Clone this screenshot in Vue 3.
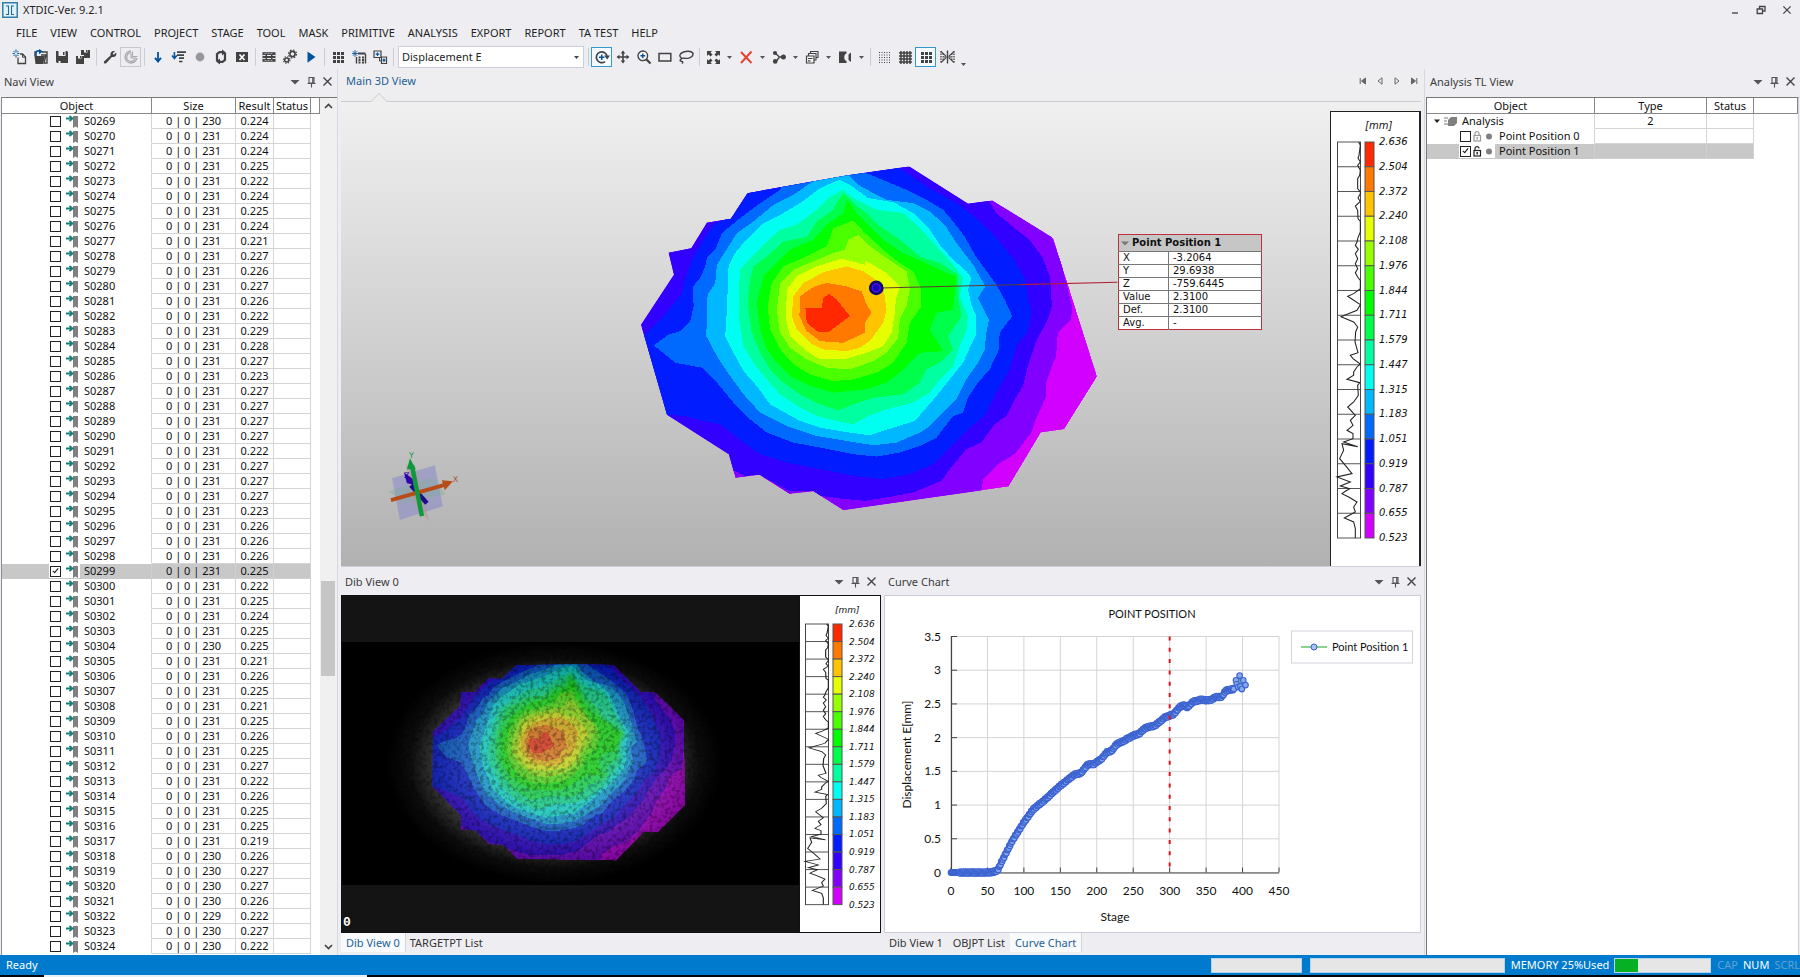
<script setup>
import { ref } from 'vue'

const menus = ['FILE', 'VIEW', 'CONTROL', 'PROJECT', 'STAGE', 'TOOL', 'MASK', 'PRIMITIVE', 'ANALYSIS', 'EXPORT', 'REPORT', 'TA TEST', 'HELP']

const D = '#424242'
const B = '#00539c'
const icons = {
  newFile: `<path d="M6 8.5V14.5H13.5V8L10.5 5H8" fill="none" stroke="${D}" stroke-width="1.3"/><path d="M10.5 5V8.2H13.5" fill="none" stroke="${D}"/><path d="M4 0.5V3M4 6V8.5M0.5 4.5H2.7M5.3 4.5H7.5M1.5 2L3 3.5M5 5.5L6.5 7M6.5 2L5 3.5M3 5.5L1.5 7" stroke="${B}" stroke-width="1"/>`,
  open: `<path d="M1.5 7H12L10 15H2.5Z" fill="${D}"/><path d="M2 7V3H4M9 3H14V14H11L13 6H8" fill="none" stroke="${D}" stroke-width="1.4"/><path d="M3 7V4C3 2 5 1.5 7 2.2" fill="none" stroke="${B}" stroke-width="1.6"/><path d="M6 0L10 2.6L6 5.2Z" fill="${B}"/>`,
  save: `<path d="M2 2H13L14 3V14H3L2 13Z" fill="${D}"/><path d="M4.5 2H11.5V7H4.5Z" fill="#eeeef2"/><path d="M9 3H10.5V6H9Z" fill="${D}"/><path d="M4.5 12H6.5V14H4.5Z" fill="#eeeef2"/>`,
  saveAll: `<path d="M6 1H15V9H9V6H6Z" fill="${D}"/><path d="M1 7H9V15H1Z" fill="${D}"/><path d="M9 1H12.5V3.5H9ZM3 7H6.5V9.5H3Z" fill="#eeeef2"/><path d="M11 1H12V3H11ZM5 7H6V9H5Z" fill="${D}"/>`,
  wrench: `<path d="M2 12.5L8.5 6.5C8 3.5 10 1.5 13 2.2L10.6 4.4L11.8 5.8L14.2 3.4C15 6.5 12.8 8.4 9.9 8L4 14.4C2.8 15 1.2 13.8 2 12.5Z" fill="${D}"/>`,
  clock: `<path d="M8 2A6 6 0 1 0 14 9" fill="none" stroke="#aaaab0" stroke-width="1.4"/><path d="M8.5 4A4.2 4.2 0 1 0 12 9.5" fill="none" stroke="#aaaab0" stroke-width="1.2"/><path d="M8 5V9H13M9.5 2.5V7.5H14.5" fill="none" stroke="#aaaab0" stroke-width="1.1"/>`,
  down: `<path d="M8 3V12" stroke="${B}" stroke-width="1.8"/><path d="M5 8.8L8 12.4L11 8.8" fill="none" stroke="${B}" stroke-width="1.9"/>`,
  stepFilter: `<path d="M6 3.2H15M6 6.2H13M8 9.2H13M8 12.5H11.5" stroke="${D}" stroke-width="1.7"/><path d="M3.4 3V9" stroke="${B}" stroke-width="1.6"/><path d="M1 6.5L3.4 9.5L5.8 6.5" fill="none" stroke="${B}" stroke-width="1.6"/>`,
  record: `<circle cx="8" cy="8" r="4.4" fill="#98989c"/>`,
  refresh: `<path d="M4 12V5L6.5 3.2H9.5M12 4V11L9.5 12.8H6.5" fill="none" stroke="${D}" stroke-width="2.2"/><path d="M9 0.5L13 3.5L9 6.5ZM7 9.5L3 12.5L7 15.5Z" fill="${D}"/>`,
  boxX: `<path d="M2 3H14V13H2Z" fill="${D}"/><path d="M2 3.8H14" stroke="${D}" stroke-width="1.6"/><path d="M5.5 5.5L10.5 11M10.5 5.5L5.5 11" stroke="#fff" stroke-width="1.7"/>`,
  strips: `<path d="M1.5 3.2H14.5V12.8H1.5Z" fill="${D}"/><path d="M1.5 6.5H4.5M6 6.5H10M11.5 6.5H14.5M1.5 9.5H4.5M6 9.5H10M11.5 9.5H14.5" stroke="#eeeef2" stroke-width="1.2"/><path d="M3.5 4.6H12.5M3.5 11.4H12.5" stroke="#eeeef2" stroke-width=".6" stroke-dasharray="2 1"/>`,
  gears: `<circle cx="10.5" cy="5" r="2.6" fill="none" stroke="${D}" stroke-width="1.6"/><circle cx="10.5" cy="5" r="4" fill="none" stroke="${D}" stroke-width="1.2" stroke-dasharray="1.6 1.54"/><circle cx="4.7" cy="11" r="2" fill="none" stroke="${D}" stroke-width="1.5"/><circle cx="4.7" cy="11" r="3.3" fill="none" stroke="${D}" stroke-width="1.1" stroke-dasharray="1.3 1.29"/>`,
  play: `<path d="M4.5 2.5L12.5 8L4.5 13.8Z" fill="${B}"/>`,
  grid9: `<path d="M3 3H6V6H3ZM7 3H10V6H7ZM11 3H14V6H11ZM3 7H6V10H3ZM7 7H10V10H7ZM11 7H14V10H11ZM3 11H6V14H3ZM7 11H10V14H7ZM11 11H14V14H11Z" fill="${D}"/>`,
  newGrid: `<path d="M4 1V8M1 4.5H7M1.8 2.2L6.2 6.8M6.2 2.2L1.8 6.8" stroke="${B}" stroke-width=".8"/><path d="M7 4.5H14.5" stroke="${D}" stroke-width="2"/><path d="M5.5 8V14.5M14.5 5V14.5" stroke="${D}" stroke-width="1.4"/><path d="M7.5 8.5H9.5M11 8.5H13M7.5 11H9.5M11 11H13M7.5 13.5H9.5M11 13.5H13" stroke="${D}" stroke-width="1.8"/>`,
  nested: `<path d="M2 2H9V8.5H2Z" fill="#eeeef2" stroke="${D}" stroke-width="1.2"/><path d="M5.5 3.5V7M3.7 5.2H7.3" stroke="${B}" stroke-width="1.2"/><path d="M7.5 8.5V12H11" fill="none" stroke="${D}"/><path d="M9.5 8H14.5V14.5H9.5Z" fill="#eeeef2" stroke="${D}" stroke-width="1.2"/><path d="M12 9.5V13M10.5 11.2H13.5" stroke="${B}" stroke-width="1.2"/>`,
  rotate: `<path d="M13 7A5.4 5.4 0 1 0 11 12.6" fill="none" stroke="${D}" stroke-width="1.7"/><path d="M10.2 6.6H16L13.1 10.4Z" fill="${D}"/><path d="M7.7 5.5V11M5 8.2H10.4" stroke="${B}" stroke-width="1.5"/>`,
  move: `<path d="M8 3V13M3 8H13" stroke="${D}" stroke-width="1.6"/><path d="M8 1.5L5.7 4.5H10.3ZM8 14.5L5.7 11.5H10.3ZM1.5 8L4.5 5.7V10.3ZM14.5 8L11.5 5.7V10.3Z" fill="${D}"/>`,
  magnify: `<circle cx="6.8" cy="6.8" r="4.8" fill="#f8f8fa" stroke="${D}" stroke-width="1.4"/><path d="M10.3 10.3L14.5 14.5" stroke="${D}" stroke-width="2.2"/><path d="M6.8 4.4V9.2M4.4 6.8H9.2" stroke="${B}" stroke-width="1.4"/>`,
  rect: `<path d="M2 4.5H13.8V12H2Z" fill="none" stroke="${D}" stroke-width="1.5"/>`,
  lasso: `<path d="M4 9.3C0.6 7.8 1.3 4.6 5.5 3C10 1.4 15.6 2.4 15 5.6C14.4 8.8 9.6 9.8 6 9.2C3.6 8.8 1 11.4 2.6 12C4.4 12.4 5.6 12.8 4 14.6" fill="none" stroke="${D}" stroke-width="1.4"/>`,
  expand: `<path d="M2 2H7L5.5 3.5L7.5 5.6L5.6 7.5L3.5 5.5L2 7ZM15 2H10L11.5 3.5L9.5 5.6L11.4 7.5L13.5 5.5L15 7ZM2 15H7L5.5 13.5L7.5 11.4L5.6 9.5L3.5 11.5L2 10ZM15 15H10L11.5 13.5L9.5 11.4L11.4 9.5L13.5 11.5L15 10Z" fill="${D}"/>`,
  remove: `<path d="M3 3L13.5 14M13.5 2.5L3 14" stroke="#e8402c" stroke-width="1.9"/>`,
  nodes: `<path d="M4.5 4.5L8.5 8M5 12.5L8.5 8M8.5 8H12.5" stroke="${D}" stroke-width="1.4"/><circle cx="4" cy="4" r="2.1" fill="${D}"/><circle cx="4.2" cy="12.4" r="2.3" fill="${D}"/><circle cx="12.4" cy="8" r="2.5" fill="${D}"/>`,
  layers: `<path d="M6.5 5V2.5H14V8.5H12" fill="none" stroke="${D}" stroke-width="1.1"/><path d="M4.5 7V4.5H12V11H10" fill="none" stroke="${D}" stroke-width="1.1"/><path d="M2.5 7H10V14H2.5Z" fill="#f4f4f6" stroke="${D}" stroke-width="1.2"/><path d="M4 9.5H8.5M4 11.8H6.5" stroke="${D}" stroke-width="1.2"/>`,
  contrast: `<path d="M2 2.5H9.5V4.5C6.5 5 6.5 11.5 9.5 12V14H2Z" fill="${D}"/><path d="M14 3.5V13L11.5 11V5.5Z" fill="${D}"/>`,
  dots: `<g stroke="${D}" stroke-width="1" stroke-dasharray="1 1.5"><path d="M3 3.5H14M3 6H14M3 8.5H14M3 11H14M3 13.5H14"/></g>`,
  hash: `<path d="M4 2V15M7 2V15M10 2V15M13 2V15M2 4H15M2 7H15M2 10H15M2 13H15" stroke="${D}" stroke-width="1.5"/>`,
  mirror: `<path d="M8.5 1.5V14.5" stroke="${D}" stroke-width="1.4"/><path d="M5 8H12M2 2.5L7 7.2M2 13.5L7 8.8M15 2.5L10 7.2M15 13.5L10 8.8" fill="none" stroke="${D}" stroke-width="1.1"/><path d="M2 2V14M15 2V14M4.2 4.5V11.5M12.8 4.5V11.5" stroke="${D}" stroke-width="1.3" stroke-dasharray="1.5 1"/>`,
}
const groupsBefore = [
  [['newFile', 'New'], ['open', 'Open'], ['save', 'Save'], ['saveAll', 'Save all']],
  [['wrench', 'Settings'], ['clock', 'Timing', 'muted']],
  [['down', 'Step down'], ['stepFilter', 'Step list'], ['record', 'Record'], ['refresh', 'Refresh'], ['boxX', 'Clear']],
  [['strips', 'Film'], ['gears', 'Compute'], ['play', 'Play']],
  [['grid9', 'Grid'], ['newGrid', 'New grid'], ['nested', 'Nested grid']],
]
const groupsAfter = [
  [['rotate', 'Rotate', 'on'], ['move', 'Pan'], ['magnify', 'Zoom'], ['rect', 'Rectangle'], ['lasso', 'Lasso']],
  [['expand', 'Fit', 'drop'], ['remove', 'Delete', 'drop'], ['nodes', 'Nodes', 'drop'], ['layers', 'Layers', 'drop'], ['contrast', 'Contrast', 'drop']],
  [['dots', 'Dots'], ['hash', 'Lines'], ['grid9', 'Cells', 'on'], ['mirror', 'Mirror']],
]

const results = [224, 224, 224, 225, 222, 224, 225, 224, 221, 227, 226, 227, 226, 222, 229, 228, 227, 223, 227, 227, 227, 227, 222, 227, 227, 227, 223, 226, 226, 226, 225, 222, 225, 224, 225, 225, 221, 226, 225, 221, 225, 226, 225, 227, 222, 226, 225, 225, 219, 226, 227, 227, 226, 222, 227, 222]
const sizes = { 269: 230, 304: 230, 318: 230, 319: 230, 320: 230, 321: 230, 322: 229, 323: 230, 324: 230 }
const stages = ref(results.map((r, i) => {
  const n = 269 + i
  return { id: 'S0' + n, size: `0 | 0 | ${sizes[n] || 231}`, result: '0.' + r, checked: n === 299 }
}))

const points = ref([
  { name: 'Point Position 0', checked: false },
  { name: 'Point Position 1', checked: true },
])

const readout = [['X', '-3.2064'], ['Y', '29.6938'], ['Z', '-759.6445'], ['Value', '2.3100'], ['Def.', '2.3100'], ['Avg.', '-']]

const scaleLabels = ['2.636', '2.504', '2.372', '2.240', '2.108', '1.976', '1.844', '1.711', '1.579', '1.447', '1.315', '1.183', '1.051', '0.919', '0.787', '0.655', '0.523']
const scaleColors = ['#ff2800', '#ff7800', '#ffc400', '#e6ff00', '#98ff00', '#4aff00', '#00ff00', '#00ff4a', '#00ffa0', '#00fff0', '#00b8ff', '#006aff', '#001cff', '#3200ff', '#8200ff', '#d200ff']
const histogram = '65,0 70,10 66,40 63,48 70,60 62,70 70,85 68,100 62,110 62,140 70,150 70,155 63,168 70,178 55,192 62,205 63,230 70,238 70,270 62,290 60,300 55,310 64,322 55,335 62,350 55,365 62,380 55,392 62,405 70,415 70,440 50,455 32,463 70,488 60,505 12,524 50,540 62,555 56,570 54,600 63,632 40,640 48,650 70,666 60,675 50,690 50,700 30,712 68,722 62,730 64,760 50,780 32,795 50,815 55,820 40,835 48,850 30,865 48,875 48,890 20,900 62,914 15,905 20,925 8,950 25,970 45,995 0,1005 40,1020 10,1032 38,1040 25,1048 15,1055 35,1065 60,1080 50,1095 55,1110 22,1128 50,1140 55,1160 55,1188'

const outline = '145,309 213,296 260,219 332,207 382,130 680,77 868,50 1045,162 1118,152 1301,265 1433,681 1334,840 1264,850 1167,1012 670,1083 580,1026 508,1034 418,977 346,986 326,915 140,796 62,526 161,375'
const contours = [
  ['#8200ff', '0,0 1290,0 1297,262 1325,340 1358,470 1355,510 1315,550 1310,620 1295,655 1280,700 1278,745 1245,820 1235,850 1185,915 1135,945 1090,990 1075,1140 0,1140'],
  ['#3200ff', '0,0 1100,0 1108,155 1130,190 1185,235 1230,270 1270,325 1292,385 1297,470 1285,510 1250,575 1225,650 1210,710 1180,760 1160,800 1125,825 1085,880 1040,900 990,960 965,995 880,1030 800,1045 735,1055 660,1048 600,1040 580,1026 508,1026 418,977 375,980 345,965 0,960'],
  ['#001cff', '340,195 290,220 265,245 240,285 215,330 190,400 185,430 165,455 130,500 80,550 40,570 90,810 140,796 190,800 230,810 300,825 370,880 420,915 500,940 600,960 700,980 790,990 870,975 940,945 1000,885 1055,830 1095,800 1130,730 1170,660 1190,590 1225,545 1235,490 1215,385 1180,325 1130,265 1075,210 1020,165 930,115 840,55 830,20 340,20'],
  ['#006aff', '490,100 480,120 420,160 360,205 305,250 285,300 260,325 255,350 240,385 218,410 220,470 210,515 180,545 145,555 100,588 165,640 245,655 290,700 340,760 390,810 440,850 520,880 600,895 700,915 770,922 840,910 900,890 950,865 1000,800 1030,790 1045,745 1075,700 1110,660 1138,600 1140,550 1178,500 1155,450 1130,405 1090,350 1065,315 1035,260 1000,215 970,180 920,150 860,120 800,95 735,68 700,40'],
  ['#00b8ff', '600,80 520,135 460,165 400,215 350,250 325,290 290,345 285,400 262,435 258,560 290,620 330,680 370,735 420,790 500,830 590,860 680,875 760,888 830,880 905,848 930,830 980,780 1010,750 1040,690 1075,640 1095,600 1100,550 1108,510 1075,445 1097,410 1060,345 1010,280 975,225 930,185 880,160 800,150 760,130 715,105 680,70 620,70'],
  ['#00fff0', '658,90 690,105 745,145 820,157 880,190 930,240 960,285 1000,330 1040,365 1055,385 1045,420 1055,465 1070,500 1070,555 1048,600 1030,640 990,690 950,740 885,815 820,835 750,858 690,850 600,835 540,815 450,765 410,710 370,665 340,610 315,560 320,480 325,350 345,310 370,280 430,220 490,190 540,160 600,115'],
  ['#00ffa0', '668,120 700,145 770,180 850,190 900,235 950,290 1000,345 1030,385 1020,440 1045,500 1040,545 1020,590 1000,650 960,690 930,730 880,760 800,780 745,800 700,825 650,815 590,800 540,775 480,735 440,690 400,640 370,590 358,520 355,440 360,360 395,320 440,275 480,240 530,225 590,180 625,145'],
  ['#00ff4a', '672,130 700,160 740,190 780,230 840,270 900,320 960,340 1015,375 1015,440 1025,500 1005,530 985,560 1000,600 960,640 920,660 900,700 850,735 760,745 700,765 655,783 600,765 540,735 490,700 450,660 420,610 395,550 382,460 390,390 400,350 440,320 490,275 560,262 590,215 640,180 655,150'],
  ['#00ff00', '682,150 710,190 740,220 790,270 850,310 920,340 980,370 1010,380 1000,480 950,490 930,540 970,605 900,610 870,640 840,670 800,700 740,720 640,730 570,710 510,680 470,640 440,600 420,540 410,460 430,380 470,340 510,300 580,270 620,225 670,190'],
  ['#4aff00', '700,212 735,250 790,300 840,340 880,365 905,420 905,470 870,520 860,580 820,640 770,670 700,690 640,695 570,675 520,645 480,600 450,540 442,470 455,400 490,350 550,325 620,290 640,235'],
  ['#98ff00', '715,255 745,285 800,325 860,365 870,420 860,470 840,510 835,565 800,610 760,635 690,660 620,655 560,630 510,595 480,550 470,480 480,400 520,360 580,335 640,310 675,300 685,270'],
  ['#e6ff00', '665,327 735,345 738,333 800,370 840,410 828,450 825,490 815,550 790,590 740,610 670,630 600,630 560,605 510,560 498,510 500,420 530,380 590,350'],
  ['#ffc400', '680,350 730,365 760,385 790,410 800,480 790,520 750,575 720,595 680,605 610,600 570,580 530,540 515,500 520,440 550,400 610,368'],
  ['#ff7800', '620,400 680,410 725,425 740,465 755,490 735,520 735,550 670,580 600,575 560,545 538,500 540,440 580,412'],
  ['#ff2800', '628,433 650,450 690,500 625,548 595,548 560,520 556,475 605,475 610,445'],
]

const xTicks = [0, 50, 100, 150, 200, 250, 300, 350, 400, 450]
const yTicks = [0, 0.5, 1, 1.5, 2, 2.5, 3, 3.5]
const px = (v) => 66 + (v * 328) / 450
const py = (v) => 276 - (v * 236) / 3.5
const knots = [[0, 0], [50, 0], [60, 0.01], [65, 0.05], [69, 0.15], [84, 0.47], [100, 0.745], [113, 0.94], [128, 1.07], [147, 1.26], [162, 1.39], [169, 1.45], [179, 1.48], [187, 1.6], [196, 1.61], [206, 1.68], [214, 1.785], [221, 1.81], [227, 1.904], [235, 1.94], [248, 2.02], [258, 2.06], [267, 2.147], [280, 2.18], [294, 2.305], [305, 2.345], [314, 2.454], [319, 2.484], [324, 2.45], [332, 2.533], [343, 2.563], [355, 2.553], [363, 2.6], [372, 2.61], [377, 2.7], [388, 2.72]]
const series = []
for (let s = 0; s <= 388; s++) {
  const k = knots.findIndex((p) => p[0] >= s)
  const [x1, y1] = knots[Math.max(k, 1)]
  const [x0, y0] = knots[Math.max(k, 1) - 1]
  const wobble = s > 10 ? Math.sin(s * 2.3) * 0.015 : 0
  series.push([s, y0 + ((y1 - y0) * (s - x0)) / (x1 - x0) + wobble])
}
series.push([391, 2.85], [392, 2.79], [394, 2.75], [396, 2.92], [397, 2.76], [399, 2.72], [401, 2.85], [404, 2.78])
const seriesLine = series.map(([x, y]) => `${px(x)},${py(y)}`).join(' ')

const lowerLeftTabs = ['Dib View 0', 'TARGETPT List']
const lowerRightTabs = ['Dib View 1', 'OBJPT List', 'Curve Chart']
const pin = '<path d="M3 1.5H8V7H3ZM6.7 2V7M1.5 7.5H9.5M5.5 8V11.5" fill="none" stroke="#555" stroke-width="1.1"/>'
const cross = '<path d="M1.5 1.5L9.5 9.5M9.5 1.5L1.5 9.5" stroke="#444" stroke-width="1.4"/>'
const drop = '<path d="M0.5 4H9.5L5 8.5Z" fill="#555"/>'
const paneIcons = [['Menu', drop], ['Pin', pin], ['Close', cross]]
</script>

<template>
  <div class="app">
    <header class="titlebar">
      <svg class="logo" width="16" height="16" viewBox="0 0 16 16"><rect x=".75" y=".75" width="14.5" height="14.5" fill="#e2f1f8" stroke="#2f7fa8" stroke-width="1.5" /><path d="M4 4H6.5V12.5H4M12 4H9.5V12.5H12" fill="none" stroke="#1f6e98" stroke-width="1.1" /></svg>
      <h1>XTDIC-Ver. 9.2.1</h1>
      <div class="winbtns">
        <button aria-label="Minimize"><svg width="10" height="10" viewBox="0 0 10 10"><path d="M2 8H8" stroke="#555" stroke-width="1.5" /></svg></button>
        <button aria-label="Restore"><svg width="10" height="10" viewBox="0 0 10 10"><path d="M3.5 3.5V1.5H9V6H7M1.2 4H6.5V8.5H1.2Z" fill="none" stroke="#444" stroke-width="1.3" /></svg></button>
        <button aria-label="Close"><svg width="10" height="10" viewBox="0 0 11 11" v-html="cross"></svg></button>
      </div>
    </header>

    <nav class="menubar"><button v-for="m in menus" :key="m">{{ m }}</button></nav>

    <div class="toolbar">
      <template v-for="(g, gi) in groupsBefore" :key="'a' + gi">
        <button v-for="b in g" :key="b[0]" class="tool" :class="b[2]" :aria-label="b[1]"><svg width="16" height="16" viewBox="0 0 16 16" v-html="icons[b[0]]"></svg></button>
        <span class="sep"></span>
      </template>
      <label class="field">
        <select aria-label="Displayed quantity"><option>Displacement E</option></select>
        <svg width="7" height="5" viewBox="0 0 7 5"><path d="M1 1H6L3.5 4Z" fill="#444" /></svg>
      </label>
      <template v-for="(g, gi) in groupsAfter" :key="'b' + gi">
        <span class="sep"></span>
        <template v-for="b in g" :key="b[0]">
          <button class="tool" :class="b[2]" :aria-label="b[1]"><svg width="16" height="16" viewBox="0 0 16 16" v-html="icons[b[0]]"></svg></button>
          <button v-if="b[2] === 'drop'" class="caret" :aria-label="b[1] + ' options'"><svg width="7" height="5" viewBox="0 0 7 5"><path d="M1 1H6L3.5 4Z" fill="#555" /></svg></button>
        </template>
      </template>
      <button class="caret low" aria-label="More"><svg width="7" height="5" viewBox="0 0 7 5"><path d="M1 1H6L3.5 4Z" fill="#555" /></svg></button>
    </div>

    <main class="workspace">
      <section class="pane navi">
        <div class="panehead"><h2>Navi View</h2><button v-for="p in paneIcons" :key="p[0]" :aria-label="p[0]"><svg width="11" height="12" viewBox="0 0 11 12" v-html="p[1]"></svg></button></div>
        <div class="navibody">
          <table class="grid">
            <colgroup><col class="c-obj"><col class="c-size"><col class="c-res"><col class="c-stat"><col></colgroup>
            <thead><tr><th>Object</th><th>Size</th><th>Result</th><th>Status</th><th></th></tr></thead>
            <tbody>
              <tr v-for="s in stages" :key="s.id" :class="{ sel: s.checked }">
                <td class="obj"><div class="cellrow">
                  <span class="mark"><input v-model="s.checked" type="checkbox" :aria-label="s.id"><svg width="13" height="13" viewBox="0 0 13 13"><path d="M7 1H12V13L9.5 11.5L7 13Z" fill="#808080" /><path d="M0 3.5H6M3.5 .8L6.5 3.5L3.5 6.2" fill="none" stroke="#17807c" stroke-width="1.8" /></svg></span>
                  <span>{{ s.id }}</span>
                </div></td>
                <td>{{ s.size }}</td><td>{{ s.result }}</td><td></td><td class="none"></td>
              </tr>
            </tbody>
          </table>
          <div class="scroll">
            <button aria-label="Scroll up"><svg width="9" height="6" viewBox="0 0 9 6"><path d="M1 5L4.5 1.5L8 5" fill="none" stroke="#444" stroke-width="1.7" /></svg></button>
            <div class="track"><span></span><div class="thumb"></div></div>
            <button aria-label="Scroll down"><svg width="9" height="6" viewBox="0 0 9 6"><path d="M1 1L4.5 4.5L8 1" fill="none" stroke="#444" stroke-width="1.7" /></svg></button>
          </div>
        </div>
      </section>

      <div class="center">
        <section class="view3d">
          <div class="viewtab">
            <button class="current">Main 3D View</button>
            <svg class="notch" width="18" height="10" viewBox="0 0 18 10"><path d="M0 10L2 9.5L9 1.5L16 9.5L18 10Z" fill="#eeeeee" /><path d="M1 9.5L9 1.5L17 9.5" fill="none" stroke="#ccccd0" /></svg>
            <div class="pager">
              <button aria-label="First"><svg width="8" height="8" viewBox="0 0 8 8"><path d="M1.2 1V7M2.5 4L6.5 1V7Z" fill="#666" stroke="#666" /></svg></button>
              <button aria-label="Previous"><svg width="8" height="8" viewBox="0 0 8 8"><path d="M6 .8V7.2L2 4Z" fill="none" stroke="#666" /></svg></button>
              <button aria-label="Next"><svg width="8" height="8" viewBox="0 0 8 8"><path d="M2 .8V7.2L6 4Z" fill="none" stroke="#666" /></svg></button>
              <button aria-label="Last"><svg width="8" height="8" viewBox="0 0 8 8"><path d="M6.8 1V7M5.5 4L1.5 1V7Z" fill="#666" stroke="#666" /></svg></button>
            </div>
          </div>
          <div class="scene">
            <div class="canvas">
              <svg viewBox="0 0 989 465">
                <defs><clipPath id="specimen"><polygon :points="outline" /></clipPath></defs>
                <g transform="translate(279 48) scale(.33333)">
                  <g id="field" clip-path="url(#specimen)" shape-rendering="crispEdges">
                    <polygon :points="outline" fill="#d200ff" />
                    <polygon v-for="c in contours" :key="c[0]" :points="c[1]" :fill="c[0]" />
                  </g>
                  <path d="M790 415L1200 405" stroke="#5c3c30" stroke-width="3" />
                  <path d="M1200 405L1494 398" stroke="#b02030" stroke-width="3.5" />
                  <circle cx="769" cy="415" r="22" fill="#0c0a70" />
                  <circle cx="769" cy="415" r="12" fill="#1508c0" stroke="#5a10e0" stroke-width="4" />
                </g>
                <g transform="translate(-1 -32)">
                  <polygon points="51,409 94,396 102,437 59,451" fill="#8484cc" opacity=".5" />
                  <polygon points="48,422 92,408 105,425 62,434" fill="#7fae98" opacity=".4" />
                  <polygon points="65,395 76,402 88,452 72,432" fill="#b09a98" opacity=".6" />
                  <path d="M70 416L86 434" stroke="#1c0c88" stroke-width="4.5" />
                  <path d="M63 403L66 414L76 416L71 409Z" fill="#3000a8" />
                  <path d="M50 431L103 416" stroke="#b84c18" stroke-width="4" />
                  <path d="M101 411L112 412L104 421Z" fill="#b84c18" />
                  <path d="M71 396L81 447" stroke="#10983c" stroke-width="4.5" />
                  <path d="M69 389L66 400H75Z" fill="#10983c" />
                  <text x="68" y="389" class="axis" fill="#10983c">Y</text>
                  <text x="112" y="413" class="axis" fill="#b05030">X</text>
                  <text x="63" y="409" class="axis" fill="#3000a8">Z</text>
                </g>
              </svg>
              <table class="readout">
                <thead><tr><th colspan="2"><svg width="8" height="5" viewBox="0 0 8 5"><path d="M0 .5H8L4 4.5Z" fill="#777" /></svg>Point Position 1</th></tr></thead>
                <tbody><tr v-for="r in readout" :key="r[0]"><td>{{ r[0] }}</td><td>{{ r[1] }}</td></tr></tbody>
              </table>
            </div>
            <aside class="scale">
              <svg viewBox="0 0 88 455" width="88" height="455">
                <text x="34" y="17" class="lab big">[mm]</text>
                <g transform="translate(6 30)">
                  <rect v-for="(c, i) in scaleColors" :key="c" x="28" :y="i * 24.75" width="9" height="24.75" :fill="c" stroke="#555" stroke-width="1" />
                  <path v-for="(l, i) in scaleLabels" :key="l" :d="`M0 ${i * 24.75}H24`" stroke="#555" />
                  <path d="M.5 0V396M23.5 0V396" stroke="#444" />
                  <polyline :points="histogram" fill="none" stroke="#222" stroke-width="3.2" transform="scale(.3333)" />
                  <text v-for="(l, i) in scaleLabels" :key="'t' + l" x="42" :y="i * 24.75 + 3" class="lab big">{{ l }}</text>
                </g>
              </svg>
            </aside>
          </div>
        </section>

        <div class="lower">
          <section class="pane">
            <div class="panehead"><h2>Dib View 0</h2><button v-for="p in paneIcons" :key="p[0]" :aria-label="p[0]"><svg width="11" height="12" viewBox="0 0 11 12" v-html="p[1]"></svg></button></div>
            <div class="dib">
              <div class="photo">
                <svg viewBox="0 0 457 336" preserveAspectRatio="xMidYMid slice">
                  <defs>
                    <radialGradient id="glow"><stop offset="0" stop-color="#c8c8c8" /><stop offset=".5" stop-color="#909090" /><stop offset=".72" stop-color="#404040" /><stop offset=".86" stop-color="#101010" /><stop offset="1" stop-color="#000" /></radialGradient>
                    <filter id="speckle" x="0" y="0" width="100%" height="100%"><feTurbulence type="fractalNoise" baseFrequency=".26" numOctaves="3" seed="4" /><feColorMatrix values="0 0 0 0 0  0 0 0 0 0  0 0 0 0 0  4 0 0 0 -1.8" /></filter>
                  </defs>
                  <rect width="457" height="336" fill="#141414" />
                  <rect y="46" width="457" height="243" fill="#000" />
                  <ellipse cx="212" cy="167" rx="168" ry="121" fill="url(#glow)" opacity=".8" />
                  <use href="#field" transform="matrix(.1905 .0314 -.0566 .1936 109 32)" opacity=".6" />
                  <rect x="50" y="46" width="324" height="243" filter="url(#speckle)" opacity=".28" />
                  <text x="1" y="330" class="frame">0</text>
                </svg>
              </div>
              <aside class="scale2">
                <svg viewBox="0 0 80 336" width="80" height="336">
                  <text x="35" y="17" class="lab small">[mm]</text>
                  <g transform="translate(5 28)">
                    <rect v-for="(c, i) in scaleColors" :key="c" x="28" :y="i * 17.54" width="9" height="17.54" :fill="c" stroke="#555" stroke-width="1" />
                    <path v-for="(l, i) in scaleLabels" :key="l" :d="`M0 ${i * 17.54}H24`" stroke="#555" />
                    <path d="M.5 0V281M23.5 0V281" stroke="#444" />
                    <polyline :points="histogram" fill="none" stroke="#222" stroke-width="3.4" transform="scale(.3333 .2362)" />
                    <text v-for="(l, i) in scaleLabels" :key="'t' + l" x="44" :y="i * 17.54 + 3" class="lab small">{{ l }}</text>
                  </g>
                </svg>
              </aside>
            </div>
            <div class="tabs"><button v-for="t in lowerLeftTabs" :key="t" :class="{ current: t === 'Dib View 0' }">{{ t }}</button></div>
          </section>

          <section class="pane">
            <div class="panehead"><h2>Curve Chart</h2><button v-for="p in paneIcons" :key="p[0]" :aria-label="p[0]"><svg width="11" height="12" viewBox="0 0 11 12" v-html="p[1]"></svg></button></div>
            <div class="chart">
              <svg viewBox="0 0 535 335">
                <text x="267" y="21" text-anchor="middle" class="ct compact">POINT POSITION</text>
                <g stroke="#d4d4d4"><path v-for="x in xTicks" :key="x" :d="`M${px(x)} 40V276`" /><path v-for="y in yTicks" :key="y" :d="`M66 ${py(y)}H394`" /></g>
                <path d="M66.5 40V276.5H394" fill="none" stroke="#444" stroke-width="1.2" />
                <g stroke="#444"><path v-for="x in xTicks" :key="x" :d="`M${px(x)} 271V276`" /><path v-for="y in yTicks" :key="y" :d="`M66 ${py(y)}H72`" /></g>
                <text v-for="x in xTicks" :key="'x' + x" :x="px(x)" y="298" text-anchor="middle" class="ct">{{ x }}</text>
                <text v-for="y in yTicks" :key="'y' + y" x="56" :y="py(y) + 4" text-anchor="end" class="ct">{{ y }}</text>
                <text x="230" y="324" text-anchor="middle" class="ct">Stage</text>
                <text transform="translate(26 158) rotate(-90)" text-anchor="middle" class="ct">Displacement E[mm]</text>
                <polyline :points="seriesLine" fill="none" stroke="#3cb44a" />
                <circle v-for="(p, i) in series" :key="i" :cx="px(p[0])" :cy="py(p[1])" r="2.8" fill="#86a8ee" stroke="#3b62cf" stroke-width="1.1" />
                <path :d="`M${px(300)} 40V272`" stroke="#dc1420" stroke-width="2" stroke-dasharray="4 7.3" />
                <rect x="406.5" y="34.5" width="121" height="32" fill="#fff" stroke="#d4d4dc" />
                <path d="M416 50.5H442" stroke="#3cb44a" stroke-width="1.2" /><circle cx="429" cy="50.5" r="3" fill="#a8c4f4" stroke="#3b62cf" />
                <text x="447" y="54" class="ct compact">Point Position 1</text>
              </svg>
            </div>
            <div class="tabs"><button v-for="t in lowerRightTabs" :key="t" :class="{ current: t === 'Curve Chart' }">{{ t }}</button></div>
          </section>
        </div>
      </div>

      <section class="pane analysis">
        <div class="panehead"><h2>Analysis TL View</h2><button v-for="p in paneIcons" :key="p[0]" :aria-label="p[0]"><svg width="11" height="12" viewBox="0 0 11 12" v-html="p[1]"></svg></button></div>
        <div class="anabody">
          <table class="grid">
            <colgroup><col class="a-obj"><col class="a-type"><col class="a-stat"><col></colgroup>
            <thead><tr><th>Object</th><th>Type</th><th>Status</th><th></th></tr></thead>
            <tbody>
              <tr>
                <td class="obj"><div class="cellrow root"><svg width="24" height="12" viewBox="0 0 24 12"><path d="M0 4.5H6L3 8Z" fill="#222" /><path d="M10 3H14M10 6H13M10 9H14" stroke="#777" /><path d="M14 5L17 2H23V8L20 11H14Z" fill="#808080" /></svg><span>Analysis</span></div></td>
                <td>2</td><td></td><td class="none"></td>
              </tr>
              <tr v-for="p in points" :key="p.name" :class="{ sel: p.checked }">
                <td class="obj"><div class="cellrow leaf">
                  <span class="mark"><input v-model="p.checked" type="checkbox" :aria-label="p.name"><svg width="22" height="12" viewBox="0 0 22 12"><path :d="p.checked ? 'M3 5V3.5C3 1 7 1 7 3.5' : 'M3 5V3.5C3 1 7 1 7 3.5V5'" fill="none" :stroke="p.checked ? '#222' : '#999'" stroke-width="1.2" /><rect x="2" y="5.5" width="6.5" height="5.5" fill="#fff" :stroke="p.checked ? '#222' : '#999'" stroke-width="1.2" /><path d="M5.2 7V9.5" :stroke="p.checked ? '#222' : '#999'" stroke-width="1.4" /><circle cx="17" cy="6.5" r="3" fill="#808080" /></svg></span>
                  <span>{{ p.name }}</span>
                </div></td>
                <td></td><td></td><td class="none"></td>
              </tr>
            </tbody>
          </table>
        </div>
      </section>
    </main>

    <footer class="status">
      <span class="ready">Ready</span>
      <span class="slot a"></span>
      <span class="slot b"></span>
      <span class="mem">MEMORY 25%Used</span>
      <span class="slot meter"><i></i></span>
      <span class="key off">CAP</span><span class="key">NUM</span><span class="key off">SCRL</span>
    </footer>
    <div class="edge"></div>
  </div>
</template>

<style>
html, body { margin: 0; overflow: hidden; }
</style>

<style scoped>
.app { height: 100vh; display: flex; flex-direction: column; background: #eeeef2; color: #1e1e1e; font: 11px/14px "Noto Sans", "Open Sans", sans-serif; }
button { border: 0; padding: 0; margin: 0; background: none; font: inherit; color: inherit; display: inline-flex; align-items: center; justify-content: center; }
svg { display: block; flex: none; }
h1, h2 { margin: 0; font: inherit; flex: 1; white-space: nowrap; }

.titlebar { height: 20px; display: flex; align-items: center; padding: 0 8px 0 2px; }
.titlebar h1 { padding-left: 5px; }
.winbtns { display: flex; gap: 16px; }
.menubar { height: 25px; display: flex; align-items: center; padding-left: 16px; gap: 13px; }
.toolbar { height: 24px; display: flex; align-items: center; padding-left: 9px; }
.tool { width: 21px; height: 20px; box-sizing: border-box; }
.tool.on { border: 1px solid #3399d0; background: #f4fafe; }
.tool.muted { border: 1px solid #c8c8ce; }
.caret { width: 12px; height: 20px; }
.caret.low { align-items: flex-end; }
.sep { width: 1px; height: 18px; margin: 0 2px 0 3px; background: #ccccd4; }
.field { position: relative; width: 186px; height: 22px; margin: 0 1px 0 2px; }
.field select { appearance: none; width: 100%; height: 100%; box-sizing: border-box; border: 1px solid #ccced8; background: #fff; padding: 0 3px; font: inherit; color: inherit; border-radius: 0; }
.field svg { position: absolute; right: 4px; top: 9px; }

.workspace { flex: 1; min-height: 0; display: flex; }
.pane { display: flex; flex-direction: column; min-width: 0; min-height: 0; }
.panehead { height: 24px; box-sizing: border-box; flex: none; display: flex; align-items: center; gap: 5px; padding: 0 4px 2px; color: #3c3c3c; }
.navi { width: 337px; border-right: 1px solid #d8d8e0; flex: none; }
.navi .panehead, .analysis .panehead { height: 28px; }
.navibody { flex: 1; min-height: 0; display: flex; background: #fff; border-left: 1px solid #8c8c94; border-top: 1px solid #777; margin-left: 1px; overflow: hidden; }
.grid { flex: 1; table-layout: fixed; border-collapse: separate; border-spacing: 0; width: 100%; height: max-content; color: #111; }
.grid th { height: 16px; line-height: 15px; padding: 0; font-weight: 400; border-right: 1px solid #888; border-bottom: 1px solid #888; box-sizing: border-box; }
.grid td { height: 15px; line-height: 14px; padding: 0; text-align: center; border-right: 1px solid #d4d4d4; border-bottom: 1px solid #d4d4d4; box-sizing: border-box; white-space: nowrap; }
.grid td.obj { text-align: left; border-bottom-color: transparent; }
.grid td.none { border-color: transparent; }
.grid .sel td:not(.none) { background: #c8c8c8; border-color: #d0d0d0; }
.grid .sel td.obj { border-bottom-color: #c8c8c8; }
.c-obj { width: 150px; } .c-size { width: 84px; } .c-res { width: 38px; } .c-stat { width: 37px; }
.a-obj { width: 168px; } .a-type { width: 112px; } .a-stat { width: 47px; }
.cellrow { display: flex; align-items: center; gap: 4px; height: 14px; padding-left: 47px; }
.cellrow.leaf { padding-left: 32px; gap: 4px; }
.cellrow.root { padding-left: 7px; }
.mark { display: flex; align-items: center; gap: 5px; height: 14px; padding: 0 1px; background: #fff; }
.leaf .mark { gap: 1px; }
input[type="checkbox"] { appearance: none; position: relative; width: 11px; height: 11px; margin: 0; border: 1px solid #222; box-sizing: border-box; background: #fff; flex: none; }
input[type="checkbox"]:checked::after { content: ""; position: absolute; left: 3px; top: 0; width: 2px; height: 5px; border: solid #111; border-width: 0 1px 1px 0; transform: rotate(40deg); }
.scroll { width: 17px; flex: none; display: flex; flex-direction: column; background: #f0f0f0; }
.scroll button { height: 16px; background: #f0f0f0; }
.track { flex: 1; display: grid; grid-template-rows: 466fr 95fr 263fr; }
.thumb { background: #c6c6c6; margin: 0 2px 0 1px; }

.center { flex: 1; min-width: 0; display: grid; grid-template-rows: 498fr 384fr; gap: 4px; padding: 0 3px; border-right: 1px solid #d8d8e0; }
.view3d { display: flex; flex-direction: column; min-height: 0; border-bottom: 1px solid #cfcedc; }
.viewtab { position: relative; height: 32px; flex: none; display: flex; align-items: flex-start; justify-content: space-between; border-bottom: 1px solid #ccccd0; background: #eeeef0; padding: 0 3px 0 5px; }
.viewtab > button { height: 24px; }
.current { color: #1f5f96; }
.notch { position: absolute; left: 29px; bottom: -1px; }
.pager { display: flex; gap: 9px; height: 24px; }
.scene { flex: 1; min-height: 0; display: flex; background: linear-gradient(#f0f0f0, #b1b1b1); }
.canvas { position: relative; flex: 1; min-width: 0; }
.canvas > svg { width: 100%; height: 100%; }
.axis { font: 8px "DejaVu Sans", sans-serif; }
.readout { position: absolute; left: 777px; top: 132px; width: 144px; border: 1px solid #c03038; border-collapse: collapse; background: #fff; font: 10px/12px "DejaVu Sans", sans-serif; color: #111; }
.readout th { height: 16px; padding: 0 2px; background: #c6c6c6; text-align: left; font-weight: 700; white-space: nowrap; }
.readout th svg { display: inline-block; margin-right: 3px; }
.readout td { height: 12px; padding: 0 4px; border-top: 1px solid #777; }
.readout td:first-child { width: 41px; border-right: 1px solid #777; }
.scale { width: 88px; flex: none; margin-top: 9px; background: #fff; border: solid #222; border-width: 1px 2px 0 1px; overflow: hidden; }
.lab { font-family: "DejaVu Sans", sans-serif; font-style: italic; fill: #111; }
.big { font-size: 10px; }
.small { font-size: 9px; }

.lower { display: grid; grid-template-columns: 541fr 538fr; gap: 3px; min-height: 0; }
.dib { flex: 1; min-height: 0; display: flex; border: 1px solid #111; }
.photo { flex: 1; min-width: 0; background: #141414; overflow: hidden; }
.photo svg { width: 100%; height: 100%; }
.frame { font: 700 13px "Liberation Mono", monospace; fill: #fff; }
.scale2 { width: 80px; flex: none; background: #fff; border-left: 1px solid #111; overflow: hidden; }
.chart { flex: 1; min-height: 0; background: #fff; border: 1px solid #cccedb; }
.chart svg { width: 100%; height: 100%; }
.ct { font: 12px Lato, "Open Sans", sans-serif; fill: #111; }
.ct.compact { font-size: 11px; }
.tabs { height: 22px; flex: none; display: flex; align-items: flex-start; }
.tabs button { height: 19px; padding: 0 5px; color: #333; }
.tabs .current { background: #f8fafc; color: #1f5f96; box-shadow: 1px 0 #d4d4dc; }

.analysis { width: 374px; flex: none; padding-left: 1px; }
.anabody { flex: 1; background: #fff; border: solid #777; border-width: 1px 1px 0 1px; border-right-color: #d0d0d8; margin-right: 1px; }

.status { height: 20px; flex: none; display: flex; align-items: center; background: #007acc; color: #fff; overflow: hidden; white-space: nowrap; }
.ready { flex: 1; padding-left: 6px; }
.slot { height: 15px; background: #e6e6e6; box-sizing: border-box; border: 1px solid #b4d4ec; }
.slot.a { width: 91px; }
.slot.b { width: 195px; margin: 0 6px 0 8px; }
.slot.meter { width: 97px; margin: 0 6px 0 5px; }
.meter i { display: block; width: 24%; height: 100%; background: #06b025; }
.key { margin-right: 5px; }
.key.off { color: #62a2d2; }
.key:last-child { margin-right: 0; }
.edge { height: 2px; flex: none; background: linear-gradient(90deg, #05070c 44px, #e8f0f4 44px, #e8f0f4 367px, #05070c 367px); }
</style>
